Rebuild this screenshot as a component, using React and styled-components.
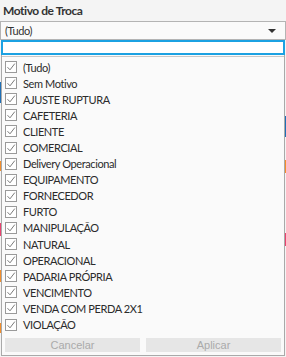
import React from 'react'
import styled, { createGlobalStyle } from 'styled-components'

const GlobalStyle = createGlobalStyle`
  body {
    margin: 0;
    background: #f4f4f4;
    font-family: Lato, "Noto Sans", sans-serif;
    color: #333;
  }
`

const items = [
  '(Tudo)',
  'Sem Motivo',
  'AJUSTE RUPTURA',
  'CAFETERIA',
  'CLIENTE',
  'COMERCIAL',
  'Delivery Operacional',
  'EQUIPAMENTO',
  'FORNECEDOR',
  'FURTO',
  'MANIPULAÇÃO',
  'NATURAL',
  'OPERACIONAL',
  'PADARIA PRÓPRIA',
  'VENCIMENTO',
  'VENDA COM PERDA 2X1',
  'VIOLAÇÃO'
]

// bits of the dashboard that peek out on both sides of the popup
const strips = [
  { side: 'left', top: 82, height: 21, color: '#1f6fb5' },
  { side: 'left', top: 161, height: 10, color: '#f28e2b' },
  { side: 'left', top: 223, height: 13, color: '#e8436f' },
  { side: 'left', top: 270, height: 12, color: '#f28e2b' },
  { side: 'left', top: 323, height: 10, color: '#f28e2b' },
  { side: 'right', top: 116, height: 21, color: '#1f6fb5' },
  { side: 'right', top: 160, height: 13, color: '#f28e2b' },
  { side: 'right', top: 233, height: 13, color: '#e8436f' }
]

const App = () => (
  <Page>
    <GlobalStyle />
    {strips.map((s, i) => (
      <Strip key={i} $side={s.side} style={{ top: s.top, height: s.height, background: s.color }} />
    ))}
    <Title>Motivo de Troca</Title>
    <Select>
      <span>(Tudo)</span>
      <Arrow />
    </Select>
    <Popup>
      <Search />
      <List>
        {items.map(name => (
          <Row key={name}>
            <Box>
              <svg width="10" height="10" viewBox="0 0 10 10">
                <path d="M1.5 5.2 L4 7.8 L8.8 1.6" fill="none" stroke="#7a7a7a" strokeWidth="1" />
              </svg>
            </Box>
            <Label>{name}</Label>
          </Row>
        ))}
      </List>
      <Footer>
        <Button>Cancelar</Button>
        <Button>Aplicar</Button>
      </Footer>
    </Popup>
  </Page>
)

const Page = styled.div`
  position: relative;
  width: 286px;
  height: 357px;
  overflow: hidden;
`

const Strip = styled.div`
  position: absolute;
  width: 1px;
  ${p => (p.$side === 'left' ? 'left: 0;' : 'left: 285px;')}
`

const Title = styled.div`
  height: 21px;
  padding-left: 3px;
  font-size: 12px;
  font-weight: bold;
  letter-spacing: -0.45px;
  line-height: 22px;
  color: #333;
`

const Select = styled.div`
  height: 17px;
  width: 271px;
  border: 1px solid #b4b4b4;
  background: #fafafa;
  display: flex;
  align-items: center;
  justify-content: space-between;
  padding-left: 4px;
  padding-right: 9px;
  font-size: 11px;
  letter-spacing: -0.4px;
`

const Arrow = styled.span`
  width: 0;
  height: 0;
  border-left: 4px solid transparent;
  border-right: 4px solid transparent;
  border-top: 4px solid #333;
`

const Popup = styled.div`
  position: relative;
  margin-left: 1px;
  width: 284px;
  box-sizing: border-box;
  border: 1px solid #a9a9a9;
  border-top: none;
  background: #fafafa;
  display: flex;
  flex-direction: column;
  z-index: 1;
`

const Search = styled.div`
  height: 15px;
  margin-left: -1px;
  margin-right: -1px;
  border: 2px solid #1ba1e2;
  box-sizing: border-box;
  background: #fff;
`

const List = styled.div`
  border-top: 1px solid #c8c8c8;
  margin-top: 1px;
  padding-top: 2px;
  display: flex;
  flex-direction: column;
`

const Row = styled.div`
  height: 16.1px;
  display: flex;
  align-items: center;
  padding-left: 3px;
`

const Box = styled.span`
  width: 12px;
  height: 12px;
  box-sizing: border-box;
  border: 1px solid #9a9a9a;
  background: #fff;
  display: flex;
  align-items: center;
  justify-content: center;
`

const Label = styled.span`
  margin-left: 6px;
  font-size: 11px;
  letter-spacing: -0.4px;
  color: #2b2b2b;
  white-space: nowrap;
`

const Footer = styled.div`
  display: grid;
  grid-template-columns: 1fr 1fr;
  gap: 6px;
  padding: 5px 3px 3px 3px;
`

const Button = styled.div`
  height: 14px;
  background: #e6e6e6;
  color: #aaa;
  font-family: "Liberation Sans", Arial, sans-serif;
  font-size: 11px;
  line-height: 14px;
  text-align: center;
`

export default App
